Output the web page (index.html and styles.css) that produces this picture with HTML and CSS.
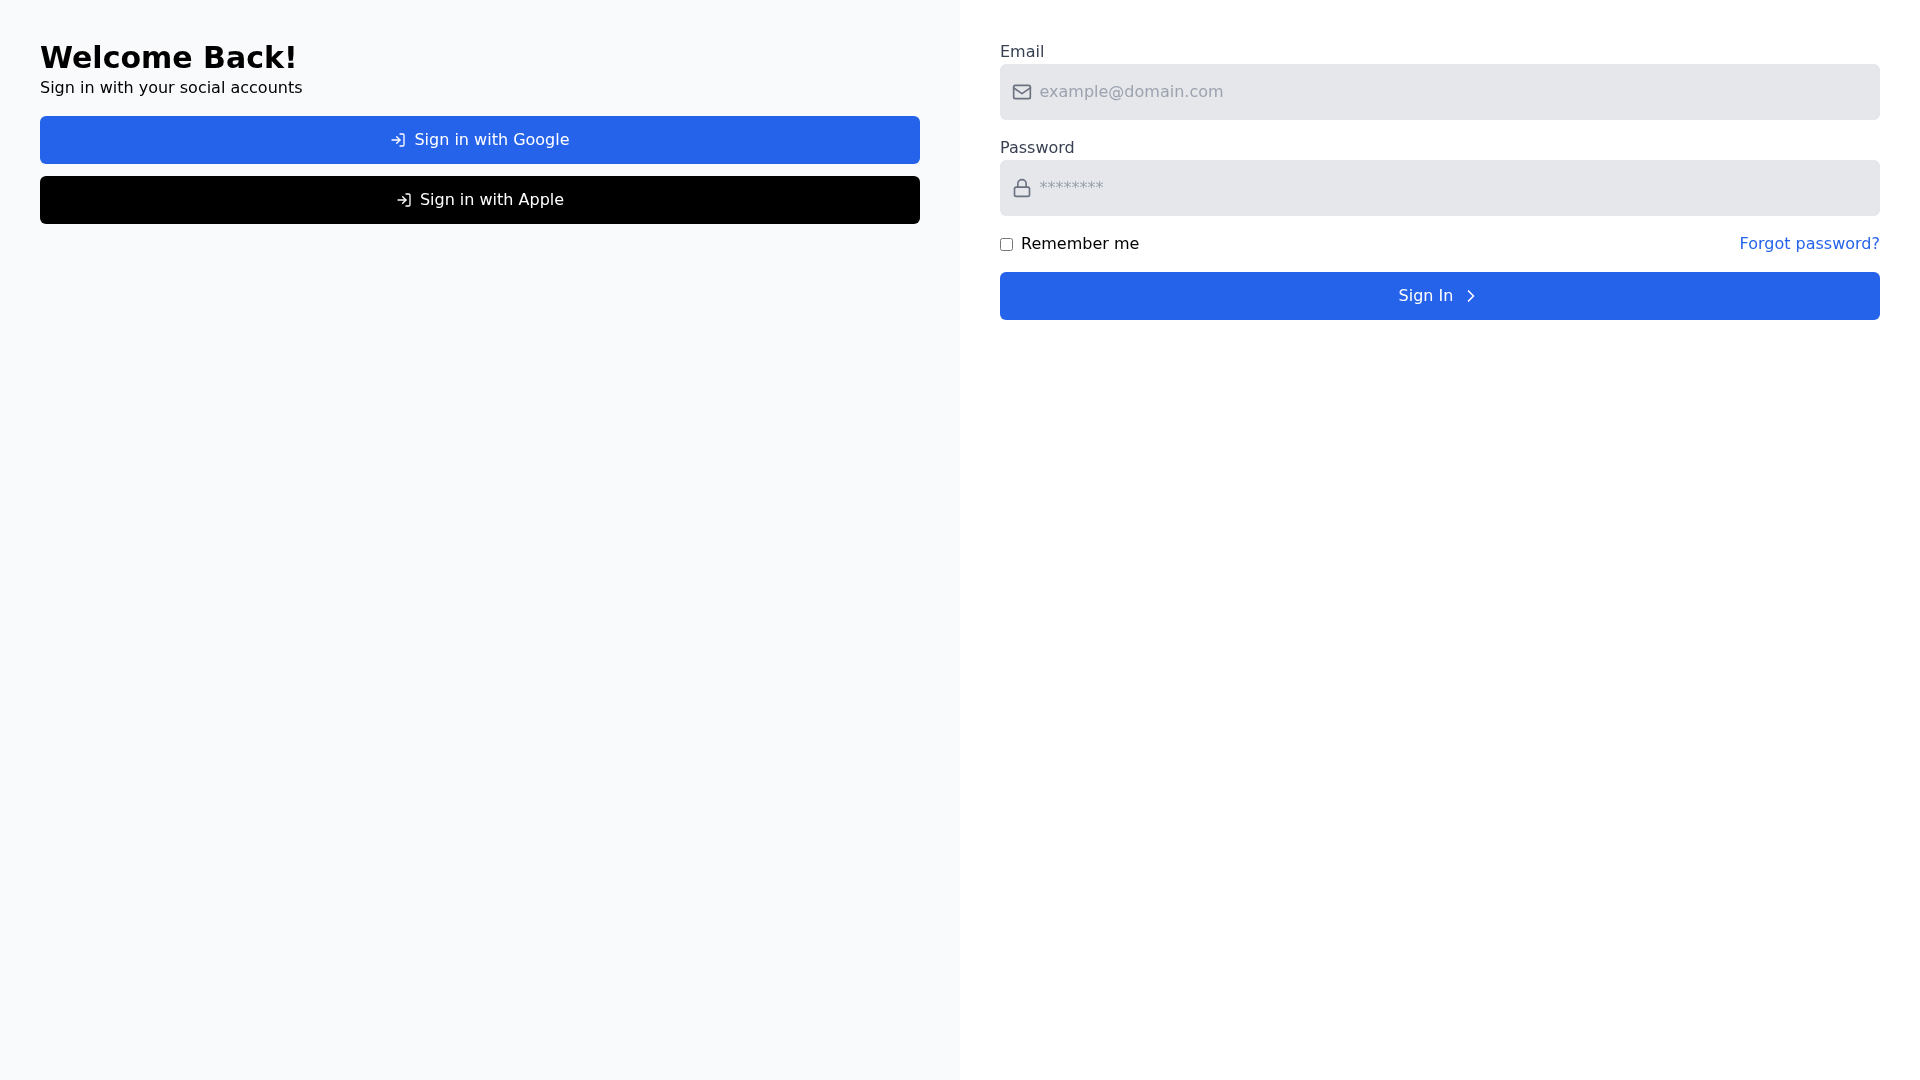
FILE: index.html
```html
<!DOCTYPE html>
<html>
<head>
  <meta charset="utf-8">
  <title>Sign in</title>
  <link rel="stylesheet" href="styles.css">
</head>
<body>
  <div class="page">
    <div class="panel panel-social">
      <h1 class="title">Welcome Back!</h1>
      <p class="subtitle">Sign in with your social accounts</p>
      <button class="btn btn-blue btn-social" type="button">
        <svg class="btn-icon" viewBox="0 0 24 24"><path d="M15 3h4a2 2 0 0 1 2 2v14a2 2 0 0 1-2 2h-4"/><path d="M10 17l5-5-5-5"/><path d="M15 12H3"/></svg>
        <span>Sign in with Google</span>
      </button>
      <button class="btn btn-black" type="button">
        <svg class="btn-icon" viewBox="0 0 24 24"><path d="M15 3h4a2 2 0 0 1 2 2v14a2 2 0 0 1-2 2h-4"/><path d="M10 17l5-5-5-5"/><path d="M15 12H3"/></svg>
        <span>Sign in with Apple</span>
      </button>
    </div>

    <form class="panel panel-form">
      <div class="field">
        <label class="field-label" for="email">Email</label>
        <div class="input-wrap">
          <svg class="input-icon" viewBox="0 0 24 24"><rect x="2" y="4" width="20" height="16" rx="2"/><path d="M22 7l-10 7L2 7"/></svg>
          <input class="input" id="email" type="email" placeholder="example@domain.com">
        </div>
      </div>
      <div class="field">
        <label class="field-label" for="password">Password</label>
        <div class="input-wrap">
          <svg class="input-icon" viewBox="0 0 24 24"><rect x="3" y="11" width="18" height="11" rx="2"/><path d="M7 11V7a5 5 0 0 1 10 0v4"/></svg>
          <input class="input" id="password" type="password" placeholder="********">
        </div>
      </div>
      <div class="options">
        <label class="remember"><input class="checkbox" type="checkbox"><span>Remember me</span></label>
        <a class="forgot" href="#">Forgot password?</a>
      </div>
      <button class="btn btn-blue btn-submit" type="button">
        <span>Sign In</span>
        <svg class="btn-icon-lg" viewBox="0 0 24 24"><path d="M9 18l6-6-6-6"/></svg>
      </button>
    </form>
  </div>
</body>
</html>
```

FILE: styles.css
```css
* {
  box-sizing: border-box;
}

body {
  margin: 0;
  font-family: "DejaVu Sans", sans-serif;
  font-size: 16px;
  line-height: 24px;
  color: #000;
}

.page {
  display: flex;
  min-height: 100vh;
  will-change: transform; /* text gets greyscale smoothing on its own layer */
}

.panel {
  width: 50%;
  padding: 40px;
}

.panel-social {
  background-color: #f9fafb;
}

.panel-form {
  background-color: #fff;
}

.title {
  margin: 0;
  font-size: 30px;
  line-height: 36px;
  font-weight: 700;
}

.subtitle {
  margin: 0 0 16px;
}

.btn {
  display: flex;
  align-items: center;
  justify-content: center;
  gap: 8px;
  width: 100%;
  height: 48px;
  padding: 12px;
  border: none;
  border-radius: 6px;
  color: #fff;
  font: inherit;
}

.btn-blue {
  background-color: #2563eb;
}

.btn-black {
  background-color: #000;
}

.btn-social {
  margin-bottom: 12px;
}

.btn-icon,
.btn-icon-lg {
  fill: none;
  stroke: currentColor;
  stroke-width: 2;
  stroke-linecap: round;
  stroke-linejoin: round;
}

.btn-icon {
  width: 16px;
  height: 16px;
}

.btn-icon-lg {
  width: 20px;
  height: 20px;
}

.field {
  margin-bottom: 16px;
}

.field-label {
  display: block;
  color: #374151;
}

.input-wrap {
  position: relative;
}

.input-icon {
  position: absolute;
  left: 12px;
  top: 18px;
  width: 20px;
  height: 20px;
  fill: none;
  stroke: #6b7280;
  stroke-width: 2;
  stroke-linecap: round;
  stroke-linejoin: round;
}

.input {
  display: block;
  width: 100%;
  height: 56px;
  padding: 15px 16px 17px 39.5px;
  border: none;
  border-radius: 6px;
  background-color: #e5e7eb;
  font: inherit;
  color: #374151;
}

.input::placeholder {
  color: #9ca3af;
}

.options {
  display: flex;
  align-items: center;
  justify-content: space-between;
  margin-bottom: 16px;
}

.remember {
  display: flex;
  align-items: center;
  gap: 8px;
}

.checkbox {
  width: 13px;
  height: 13px;
  margin: 0;
}

.forgot {
  color: #2563eb;
  text-decoration: none;
}
```
